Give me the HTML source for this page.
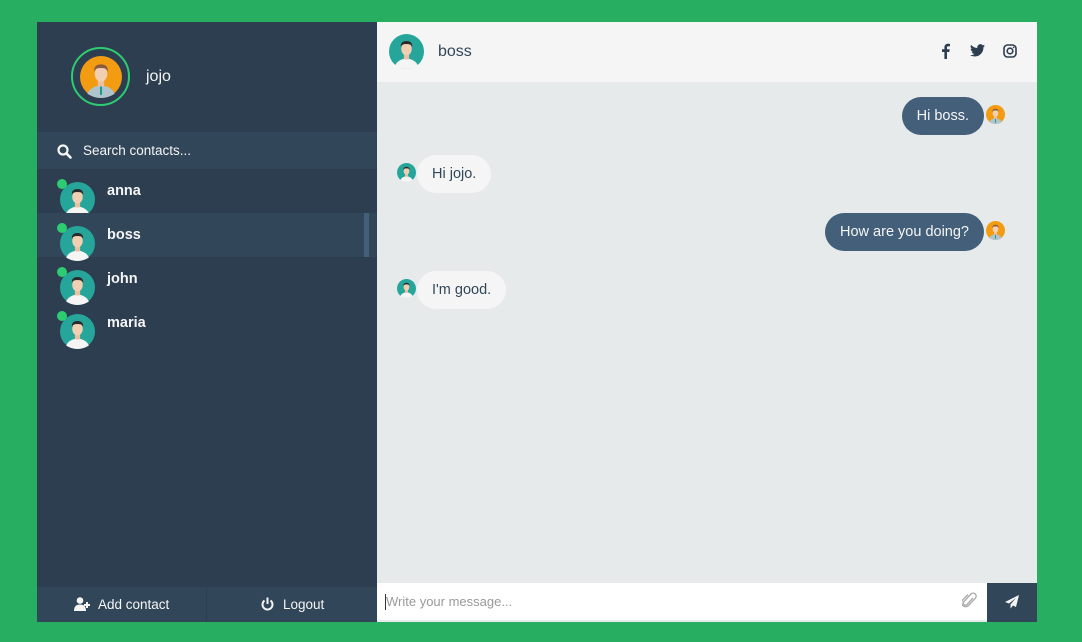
<!DOCTYPE html>
<html><head><meta charset="utf-8"><style>
*{margin:0;padding:0;box-sizing:border-box}
body{width:1082px;height:642px;background:#27ae60;font-family:"Liberation Sans",sans-serif;position:relative;overflow:hidden}
#frame{position:absolute;left:37px;top:22px;width:1000px;height:600px;background:#e6eaea}
#side{position:absolute;left:0;top:0;width:340px;height:600px;background:#2c3e50;color:#f5f5f5}
.abs{position:absolute}
.contact{position:absolute;left:0;width:340px;height:44px}
.contact .nm{position:absolute;left:70px;top:14px;font-weight:bold;font-size:14.5px}
.dot{position:absolute;left:20px;top:10px;width:10px;height:10px;border-radius:50%;background:#2ecc71}
.av{position:absolute;left:23px;top:13px}
#chat{position:absolute;left:340px;top:0;width:660px;height:600px}
.bub{position:absolute;height:38px;border-radius:19px;font-size:14.5px;line-height:38px;padding:0 15px}
.me{background:#435f7a;color:#f5f5f5}
.them{background:#f5f5f5;color:#32465a}
</style></head><body>
<svg width="0" height="0" style="position:absolute">
<defs>
<symbol id="t" viewBox="0 0 40 40"><circle cx="20" cy="20" r="20" fill="#26a69a"/><path d="M7 36 Q10 29 20 28 Q30 29 33 36 Q27 40 20 40 Q13 40 7 36Z" fill="#f5f5f5"/><rect x="17" y="22" width="6" height="7" fill="#e9c0a2"/><ellipse cx="20" cy="17" rx="6" ry="7.5" fill="#f2cfb3"/><path d="M13.5 15 Q13 8 20 8 Q27 8 26.5 15 Q25 11 20 11.5 Q15 11 13.5 15Z" fill="#2b2b2b"/></symbol>
<symbol id="o" viewBox="0 0 40 40"><circle cx="20" cy="20" r="20" fill="#f39c12"/><path d="M7 36 Q10 29 20 28 Q30 29 33 36 Q27 40 20 40 Q13 40 7 36Z" fill="#b0c4ce"/><rect x="19" y="29" width="2" height="8" fill="#16a085"/><rect x="17" y="22" width="6" height="7" fill="#e9c0a2"/><ellipse cx="20" cy="17" rx="6" ry="7.5" fill="#f2cfb3"/><path d="M13.5 15 Q13 8 20 8 Q27 8 26.5 15 Q25 11 20 11.5 Q15 11 13.5 15Z" fill="#8a5a3c"/></symbol>
</defs></svg>
<div id="frame">
<div id="side">
 <div class="abs" style="left:34px;top:25px;width:59px;height:59px;border-radius:50%;border:2px solid #2ecc71"></div>
 <svg class="abs" style="left:43px;top:34px" width="42" height="42"><use href="#o"/></svg>
 <div class="abs" style="left:109px;top:46px;font-size:16px">jojo</div>
 <div class="abs" style="left:0;top:110px;width:340px;height:37px;background:#32465a"></div>
 <svg class="abs" style="left:20px;top:122px" width="15" height="15" viewBox="0 0 15 15"><circle cx="6" cy="6" r="4.5" fill="none" stroke="#f5f5f5" stroke-width="2.2"/><line x1="9.3" y1="9.3" x2="13.5" y2="13.5" stroke="#f5f5f5" stroke-width="2.6" stroke-linecap="round"/></svg>
 <div class="abs" style="left:46px;top:121px;font-size:13.5px">Search contacts...</div>
 <div class="contact" style="top:147px"><svg class="av" width="35" height="35"><use href="#t"/></svg><div class="dot"></div><div class="nm">anna</div></div>
 <div class="contact" style="top:191px;background:#32465a"><div class="abs" style="left:327px;top:0;width:5px;height:44px;background:#435f7a"></div><svg class="av" width="35" height="35"><use href="#t"/></svg><div class="dot"></div><div class="nm">boss</div></div>
 <div class="contact" style="top:235px"><svg class="av" width="35" height="35"><use href="#t"/></svg><div class="dot"></div><div class="nm">john</div></div>
 <div class="contact" style="top:279px"><svg class="av" width="35" height="35"><use href="#t"/></svg><div class="dot"></div><div class="nm">maria</div></div>
 <div class="abs" style="left:0;top:565px;width:170px;height:35px;background:#32465a;border-right:1px solid #2c3e50"></div>
 <div class="abs" style="left:170px;top:565px;width:170px;height:35px;background:#32465a"></div>
 <svg class="abs" style="left:37px;top:575px" width="17" height="14" viewBox="0 0 17 14"><circle cx="6" cy="3.5" r="3.3" fill="#f5f5f5"/><path d="M0 14 Q0 7.5 6 7.5 Q12 7.5 12 14Z" fill="#f5f5f5"/><path d="M13 5v6M10 8h6" stroke="#f5f5f5" stroke-width="2"/></svg>
 <div class="abs" style="left:61px;top:575px;font-size:13.5px">Add contact</div>
 <svg class="abs" style="left:224px;top:575px" width="13" height="14" viewBox="0 0 13 14"><path d="M3.5 3.5 A5 5 0 1 0 9.5 3.5" fill="none" stroke="#f5f5f5" stroke-width="2"/><line x1="6.5" y1="0.5" x2="6.5" y2="7" stroke="#f5f5f5" stroke-width="2"/></svg>
 <div class="abs" style="left:246px;top:575px;font-size:13.5px">Logout</div>
</div>
<div id="chat">
 <div class="abs" style="left:0;top:0;width:660px;height:60px;background:#f5f5f5"></div>
 <svg class="abs" style="left:12px;top:12px" width="35" height="35"><use href="#t"/></svg>
 <div class="abs" style="left:61px;top:21px;font-size:16px;color:#32465a">boss</div>
 <svg class="abs" style="left:564px;top:21px" width="9" height="16" viewBox="0 0 9 16"><path d="M6 16V9h2.3l.4-2.7H6V4.6c0-.8.3-1.3 1.4-1.3H9V.9C8.6.8 7.8.7 6.9.7 4.8.7 3.4 2 3.4 4.3v2H1V9h2.4v7z" fill="#2c3e50"/></svg>
 <svg class="abs" style="left:593px;top:22px" width="15" height="13" viewBox="0 0 24 20"><path d="M24 2.4a9.8 9.8 0 0 1-2.8.8A4.9 4.9 0 0 0 23.3.4a9.9 9.9 0 0 1-3.1 1.2A4.9 4.9 0 0 0 11.8 6 14 14 0 0 1 1.7.9a4.9 4.9 0 0 0 1.5 6.6A4.9 4.9 0 0 1 1 6.9a4.9 4.9 0 0 0 3.9 4.9 4.9 4.9 0 0 1-2.2.1 4.9 4.9 0 0 0 4.6 3.4A9.9 9.9 0 0 1 0 17.3 14 14 0 0 0 7.5 19.5c9.1 0 14-7.5 14-14v-.6A10 10 0 0 0 24 2.4z" fill="#2c3e50"/></svg>
 <svg class="abs" style="left:626px;top:22px" width="14" height="14" viewBox="0 0 14 14"><rect x="1" y="1" width="12" height="12" rx="3.5" fill="none" stroke="#2c3e50" stroke-width="1.6"/><circle cx="7" cy="7" r="2.8" fill="none" stroke="#2c3e50" stroke-width="1.6"/><circle cx="10.6" cy="3.4" r=".8" fill="#2c3e50"/></svg>
 <div class="bub me" style="right:53px;top:75px">Hi boss.</div>
 <svg class="abs" style="left:609px;top:83px" width="19" height="19"><use href="#o"/></svg>
 <svg class="abs" style="left:20px;top:141px" width="19" height="19"><use href="#t"/></svg>
 <div class="bub them" style="left:40px;top:133px">Hi jojo.</div>
 <div class="bub me" style="right:53px;top:191px">How are you doing?</div>
 <svg class="abs" style="left:609px;top:199px" width="19" height="19"><use href="#o"/></svg>
 <svg class="abs" style="left:20px;top:257px" width="19" height="19"><use href="#t"/></svg>
 <div class="bub them" style="left:40px;top:249px">I'm good.</div>
 <div class="abs" style="left:0;top:561px;width:610px;height:37px;background:#fff"></div>
 <div class="abs" style="left:8px;top:572px;width:1px;height:16px;background:#333"></div>
 <div class="abs" style="left:9px;top:572px;font-size:13px;color:#999">Write your message...</div>
 <svg class="abs" style="left:585px;top:570px" width="15" height="17" viewBox="0 0 15 17"><path d="M11 6 L5 12.5 a2 2 0 0 1-3-3 L9 2 a3 3 0 0 1 4.3 4.3 L6.5 13.5 a4 4 0 0 1-5.7-5.7 L6 2.5" fill="none" stroke="#aaa" stroke-width="1.3"/></svg>
 <div class="abs" style="left:610px;top:561px;width:50px;height:39px;background:#32465a"></div>
 <svg class="abs" style="left:628px;top:573px" width="14" height="14" viewBox="0 0 14 14"><path d="M14 0 L0 7 L4 8.5 L11 3 L5.5 9.5 L5.5 13.5 L8 10.5 L11 12Z" fill="#f5f5f5"/></svg>
</div>
</div>
</body></html>
